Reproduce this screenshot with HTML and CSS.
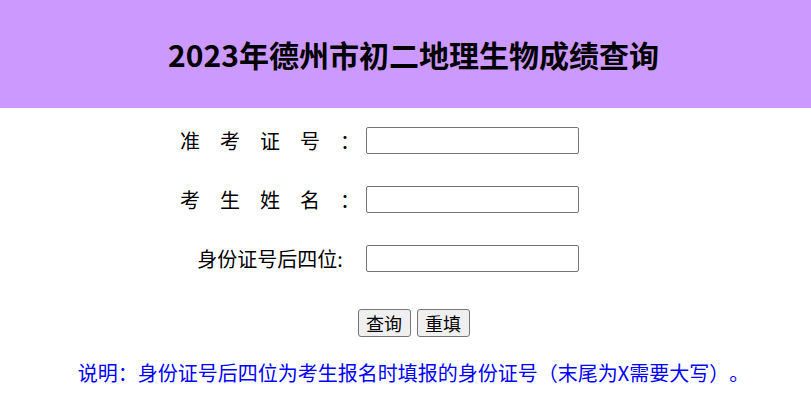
FILE: index.html
```html
<!DOCTYPE html>
<html lang="zh-CN">
<head>
  <meta charset="UTF-8">
  <title>2023年德州市初二地理生物成绩查询</title>
  <link rel="stylesheet" href="styles.css">
</head>
<body>
  <div class="cabecera">
    <h1>2023年德州市初二地理生物成绩查询</h1>
  </div>

  <form class="consulta" onsubmit="return false">
    <div class="campos">
      <label class="etiqueta" for="zkzh">准　考　证　号　：</label>
      <input class="caja" type="text" id="zkzh">

      <label class="etiqueta" for="xm">考　生　姓　名　：</label>
      <input class="caja" type="text" id="xm">

      <label class="etiqueta" for="sfz">身份证号后四位:</label>
      <input class="caja" type="text" id="sfz">
    </div>

    <div class="botones">
      <button class="boton" type="submit">查询</button>
      <button class="boton" type="reset">重填</button>
    </div>

    <p class="nota">说明：身份证号后四位为考生报名时填报的身份证号（末尾为X需要大写）。</p>
  </form>
</body>
</html>
```

FILE: styles.css
```css
body {
  margin: 0;
  font-family: "Noto Sans CJK SC", "Microsoft YaHei", sans-serif;
  color: #000;
  background: #fff;
  text-spacing-trim: space-all;
}

.cabecera {
  background: #cc99ff;
  height: 108px;
  display: flex;
  align-items: center;
  justify-content: center;
  padding-left: 16px;
}

.cabecera h1 {
  margin: 0;
  font-size: 30px;
  font-weight: bold;
  line-height: 1;
}

.consulta {
  padding-left: 16px;
  padding-top: 19px;
}

.campos {
  display: grid;
  grid-template-columns: 184px 213px;
  column-gap: 4px;
  row-gap: 32px;
  align-items: center;
  width: fit-content;
  margin: 0 auto;
  padding-right: 70px;
}

.etiqueta {
  font-size: 20px;
  line-height: 27px;
  text-align: center;
  white-space: nowrap;
}

.caja {
  box-sizing: border-box;
  width: 213px;
  height: 27px;
  border: 1px solid #767676;
  border-radius: 2px;
  padding: 1px 4px;
  font-size: 16px;
}

.botones {
  display: flex;
  justify-content: center;
  gap: 6px;
  margin-top: 37px;
}

.boton {
  box-sizing: border-box;
  height: 28px;
  width: 53px;
  padding: 0 6px;
  font-family: inherit;
  font-size: 18px;
  line-height: 24px;
  background: #efefef;
  border: 1px solid #767676;
  border-radius: 3px;
  color: #000;
}

.nota {
  margin: 21px 0 0;
  text-align: center;
  font-size: 20px;
  line-height: 30px;
  color: #0000ff;
  white-space: nowrap;
}
```
